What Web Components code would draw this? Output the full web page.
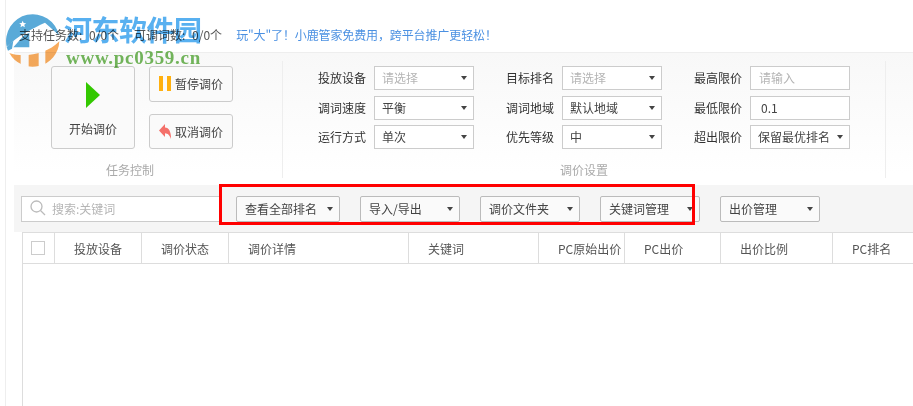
<!DOCTYPE html>
<html lang="zh">
<head>
<meta charset="utf-8">
<title>调价</title>
<style>
html,body{margin:0;padding:0;background:#fff;overflow:hidden}
body{width:913px;height:406px;font:12px "Noto Sans CJK SC","Liberation Sans",sans-serif;color:#444}
</style>
</head>
<body>
<app-page>
  <notice-bar></notice-bar>
  <control-panel>
    <task-control slot="task"></task-control>
    <price-settings slot="settings"></price-settings>
  </control-panel>
  <tool-bar></tool-bar>
  <grid-head></grid-head>
</app-page>
<water-mark></water-mark>
<mark-box></mark-box>
<script>
const define=(name,html)=>{
  customElements.define(name,class extends HTMLElement{
    constructor(){
      super();
      this.attachShadow({mode:'open'}).innerHTML=typeof html==='function'?html(this):html;
    }
  });
};
define('app-page',`<style>
:host{display:block;height:406px;box-sizing:border-box;margin-left:5px;padding-left:8px;border-left:1px solid #eee}
</style><slot></slot>`);

define('notice-bar',`<style>
:host{display:flex;height:52px;box-sizing:border-box;padding:26px 0 0 5px;line-height:18px;color:#555;white-space:nowrap}
span{margin-right:15px;word-spacing:4px}
span+span{margin-right:14px}
b{font-weight:400;color:#4a90e2;letter-spacing:-.12px}
</style><span>支持任务数: 0/0个</span><span>可调词数: 0/0个</span><b>玩"大"了！小鹿管家免费用，跨平台推广更轻松！</b>`);

define('control-panel',`<style>
:host{display:flex;height:126px;box-sizing:border-box;padding-top:8px;border-top:1px solid #eee;background:linear-gradient(#f8f8f8,#fff 96%)}
.task{display:block;width:269px;height:117px;box-sizing:border-box;border-right:1px solid #eee}
.settings{display:block;width:603px;height:117px;box-sizing:border-box;border-right:1px solid #eee}
</style><div class="task"><slot name="task"></slot></div><div class="settings"><slot name="settings"></slot></div>`);

define('action-btn',`<style>
:host{display:flex;align-items:center;justify-content:center;box-sizing:border-box;width:84px;height:36px;gap:4px;border:1px solid #ccc;border-radius:3px;color:#444;background:#fafafa;white-space:nowrap}
:host([big]){flex-direction:column;height:83px;gap:12px;padding-top:4px}
</style><slot name="icon"></slot><slot></slot>`);

define('task-control',`<style>
:host{display:grid;grid-template-columns:84px 84px;column-gap:14px;grid-template-rows:83px auto;padding:5px 0 0 37px}
.side{display:flex;flex-direction:column;gap:12px}
.cap{grid-column:1/3;margin-top:12px;padding-left:55px;line-height:18px;color:#aaa}
svg{display:block}
</style>
<action-btn big><svg slot="icon" width="14" height="26" viewBox="0 0 14 26"><path d="M0 0L14 13L0 26Z" fill="#33c800"/></svg>开始调价</action-btn>
<div class="side">
<action-btn><svg slot="icon" width="12" height="15" viewBox="0 0 12 15"><path d="M0 0h4v15H0zM8 0h4v15H8z" fill="#ffb00f"/></svg>暂停调价</action-btn>
<action-btn><svg slot="icon" width="12" height="15" viewBox="0 0 12 15"><path d="M0 6.500L6 0V3.500C10 3.800 12 7.500 12 15C10.500 11 9 9.500 6 9.300V13Z" fill="#f4706a"/></svg>取消调价</action-btn>
</div>
<div class="cap">任务控制</div>`);

define('field-select',el=>`<style>
:host{display:flex;align-items:center;justify-content:space-between;box-sizing:border-box;width:100px;height:24px;padding:0 6px 0 7px;border:1px solid #ccc;background:#fff;color:#444;white-space:nowrap}
:host([hint]){color:#b5b5b5}
i{width:0;height:0;border:3px solid transparent;border-top:4px solid #444;border-bottom:0}
</style><slot></slot>${el.hasAttribute('plain')?'':'<i></i>'}`);

define('price-settings',`<style>
:host{display:block;padding:5px 0 0 35px}
.row{display:grid;grid-template-columns:48px 100px 72px 100px 72px 100px;column-gap:8px;align-items:center;line-height:18px;color:#333;white-space:nowrap}
.row>:nth-child(3),.row>:nth-child(5){margin-left:24px}
.a{margin-bottom:6px}.b{margin-bottom:5px}
.cap{margin-top:12px;padding-left:242px;line-height:18px;color:#aaa}
</style>
<div class="row a"><span>投放设备</span><field-select hint>请选择</field-select><span>目标排名</span><field-select hint>请选择</field-select><span>最高限价</span><field-select hint plain style="padding-left:8px">请输入</field-select></div>
<div class="row b"><span>调词速度</span><field-select>平衡</field-select><span>调词地域</span><field-select>默认地域</field-select><span>最低限价</span><field-select plain style="padding-left:10px">0.1</field-select></div>
<div class="row"><span>运行方式</span><field-select>单次</field-select><span>优先等级</span><field-select>中</field-select><span>超出限价</span><field-select>保留最优排名</field-select></div>
<div class="cap">调价设置</div>`);

define('drop-btn',`<style>
:host{display:flex;align-items:center;justify-content:space-between;box-sizing:border-box;height:26px;padding:0 6px 2px 8px;border:1px solid #bbb;border-radius:2px;background:#fafafa;color:#444;white-space:nowrap}
i{width:0;height:0;margin-top:2px;border:3px solid transparent;border-top:4px solid #444;border-bottom:0}
</style><slot></slot><i></i>`);

define('tool-bar',`<style>
:host{display:flex;align-items:flex-start;height:47px;box-sizing:border-box;margin-top:7px;padding:11px 0 0 7px;background:#f5f5f5}
.search{display:flex;align-items:center;gap:6px;box-sizing:border-box;width:201px;height:26px;padding:0 0 2px 8px;margin-right:14px;border:1px solid #ccc;background:#fff;color:#b5b5b5;white-space:nowrap}
drop-btn{margin-right:20px}
svg{display:block}
</style>
<div class="search"><svg width="16" height="16" viewBox="0 0 16 16" fill="none" stroke="#bbb" stroke-width="1.300"><circle cx="6.500" cy="6.500" r="5.500"/><path d="M10.500 10.500L15 15"/></svg>搜索:关键词</div>
<drop-btn style="width:104px">查看全部排名</drop-btn>
<drop-btn style="width:100px">导入/导出</drop-btn>
<drop-btn style="width:100px">调价文件夹</drop-btn>
<drop-btn style="width:100px">关键词管理</drop-btn>
<drop-btn style="width:100px">出价管理</drop-btn>`);

define('grid-head',`<style>
:host{display:block;height:174px;margin-left:8px;border-left:1px solid #ddd}
.head{display:grid;grid-template-columns:32px 87px 87px 180px 130px 86px 96px 112px 1fr;height:32px;box-sizing:border-box;border-top:1px solid #ddd;border-bottom:1px solid #ddd;color:#555;white-space:nowrap}
.head>div{display:flex;align-items:center;box-sizing:border-box;padding-left:19px;border-right:1px solid #ddd;overflow:hidden}
.head>div:last-child{border-right:0}
.head>.check{padding-left:8px}
.check i{display:block;width:14px;height:14px;box-sizing:border-box;border:1px solid #ccc;background:#fff}
</style>
<div class="head"><div class="check"><i></i></div><div>投放设备</div><div>调价状态</div><div>调价详情</div><div>关键词</div><div>PC原始出价</div><div>PC出价</div><div>出价比例</div><div>PC排名</div></div>`);

// watermark and red highlight sit over the page
define('water-mark',`<style>
:host{position:absolute;left:0;top:8px;width:210px;height:62px;pointer-events:none;white-space:nowrap;mix-blend-mode:multiply}
svg{position:absolute;left:0;top:0}
.t{position:absolute;left:64px;top:5px;font:700 28px/32px "Noto Sans CJK SC",sans-serif;color:#58b0f0;letter-spacing:-.5px}
.u{position:absolute;left:66px;top:39px;font:700 19px/22px "Liberation Serif",serif;color:#74b85c;letter-spacing:.72px}
</style>
<svg width="70" height="62" viewBox="0 0 210 186">
<path d="M20 116A80 80 0 0 1 177 82L135 44C100 60 55 82 20 116Z" fill="#5aaad8"/>
<path d="M40 118L72 82L88 74V118Z" fill="#5aaad8"/>
<path d="M20 118C26 108 34 102 40 98L36 122L24 128Z" fill="#5aaad8"/>
<path d="M28 135C70 150 140 140 178 100A80 80 0 0 1 28 135Z" fill="#f8ab5c"/>
<path d="M62 125h24v52h-24zM116 125h20v50h-20z" fill="#fff"/>
<path d="M68 38l3 7 7.500 .6-5.700 4.900 1.800 7.500-6.600-4-6.600 4 1.800-7.500-5.700-4.900 7.500-.6z" fill="#fff"/>
</svg>
<div class="t">河东软件园</div><div class="u">www.pc0359.cn</div>`);

define('mark-box',`<style>
:host{position:absolute;left:219px;top:184px;width:476px;height:41px;box-sizing:border-box;border:3px solid #f00;pointer-events:none}
</style>`);
</script>
</body>
</html>
